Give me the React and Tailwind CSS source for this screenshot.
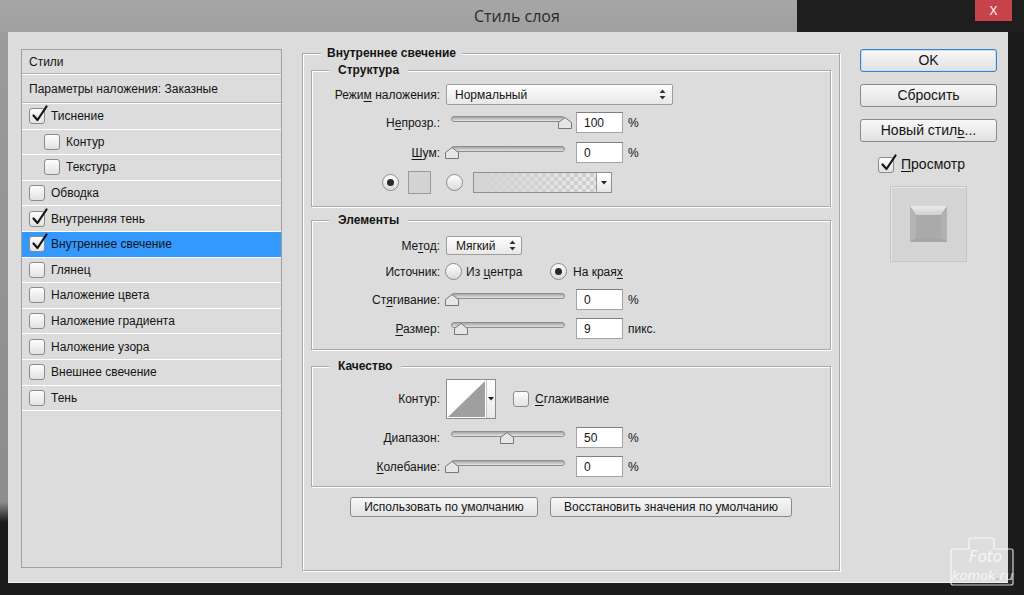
import React from 'react';

// Photoshop "Стиль слоя" dialog

const U = ({ children }) => <span className="underline underline-offset-[2px]">{children}</span>;

const Check = ({ checked }) => (
    <span className="relative block w-[16px] h-[16px] shrink-0 rounded-[3px] border border-[#8b8b8b] bg-gradient-to-b from-[#fdfdfd] to-[#e2e2e2]">
        {checked && (
            <svg className="absolute left-[1px] top-[-4px]" width="17" height="18" viewBox="0 0 17 18">
                <path d="M2.5 10.5 L6.5 15 L15.5 1.5" fill="none" stroke="#151515" strokeWidth="2.2" strokeLinecap="round" strokeLinejoin="round" />
            </svg>
        )}
    </span>
);

const Radio = ({ on }) => (
    <span className="flex items-center justify-center w-[17px] h-[17px] shrink-0 rounded-full border border-[#8b8b8b] bg-gradient-to-b from-white to-[#dadada]">
        {on && <span className="w-[7px] h-[7px] rounded-full bg-[#2a2a2a]" />}
    </span>
);

const UpDown = () => (
    <svg width="7" height="11" viewBox="0 0 7 11">
        <path d="M3.5 0.5 L6.5 4 H0.5 Z M0.5 7 H6.5 L3.5 10.5 Z" fill="#333" />
    </svg>
);

const Down = () => (
    <svg width="6" height="4" viewBox="0 0 6 4">
        <path d="M0 0 H6 L3 3.5 Z" fill="#222" />
    </svg>
);

const Slider = ({ thumb }) => (
    <div className="relative w-[125px] h-[21px] shrink-0">
        <div className="ml-[5px] mt-[4px] w-[114px] h-[6px] rounded-full border border-[#8d8d8d] bg-gradient-to-b from-[#a6a6a6] to-[#e4e4e4]" />
        <svg className={'absolute top-[5px] ' + thumb} width="14" height="12" viewBox="0 0 14 12">
            <path d="M7 0.5 L13.5 5.5 V11.5 H0.5 V5.5 Z" fill="#e6e6e6" stroke="#767676" />
        </svg>
    </div>
);

const Num = ({ v }) => (
    <div className="ml-[5px] w-[47px] h-[21px] shrink-0 flex items-center pl-[7px] bg-white border border-[#a3a3a3] border-t-[#7f7f7f]">
        {v}
    </div>
);

const Row = ({ label, className, children }) => (
    <div className={'flex items-center ' + className}>
        <span className="w-[128px] shrink-0 text-right">{label}</span>
        <div className="ml-[6px] flex items-center">{children}</div>
    </div>
);

const Group = ({ title, className, children }) => (
    <fieldset className={'border border-[#a9a9a9] shadow-[inset_1px_1px_0_#fff,1px_1px_0_#fff] ' + className}>
        <legend className="ml-[17px] px-[9px] bg-[#dcdcdc] text-[12px] leading-[14px] font-bold">{title}</legend>
        {children}
    </fieldset>
);

const styles = [
    { t: 'Тиснение', c: true },
    { t: 'Контур', sub: true },
    { t: 'Текстура', sub: true },
    { t: 'Обводка' },
    { t: 'Внутренняя тень', c: true },
    { t: 'Внутреннее свечение', c: true, sel: true },
    { t: 'Глянец' },
    { t: 'Наложение цвета' },
    { t: 'Наложение градиента' },
    { t: 'Наложение узора' },
    { t: 'Внешнее свечение' },
    { t: 'Тень' },
];

const StylesList = () => (
    <div className="mt-[17px] ml-[13px] w-[261px] h-[519px] shrink-0 border border-[#9f9f9f] bg-[#dcdcdc]">
        <div className="h-[24px] flex items-center pl-[7px] border-b border-[#b3b3b3]">Стили</div>
        <div className="h-[29px] flex items-center pl-[7px] border-t border-white border-b border-b-[#b3b3b3]">
            Параметры наложения: Заказные
        </div>
        <div className="border-t border-white">
            {styles.map((s) => (
                <div
                    key={s.t}
                    className={
                        'flex items-center h-[25.6px] border-b border-white ' +
                        (s.sel ? 'bg-[#3399ff] ' : '') +
                        (s.sub ? 'pl-[22px]' : 'pl-[7px]')
                    }
                >
                    <Check checked={s.c} />
                    <span className="ml-[6px]">{s.t}</span>
                </div>
            ))}
        </div>
    </div>
);

const Btn = ({ children, className }) => (
    <div className={'flex items-center justify-center rounded-[3px] border bg-gradient-to-b from-[#f8f8f8] to-[#e1e1e1] ' + className}>
        {children}
    </div>
);

const InnerGlow = () => (
    <fieldset className="mt-[14px] ml-[20px] w-[538px] h-[525px] shrink-0 px-[8px] border border-[#a9a9a9] shadow-[inset_1px_1px_0_#fff,1px_1px_0_#fff]">
        <legend className="ml-[10px] px-[6px] bg-[#dcdcdc] text-[12px] leading-[14px] font-bold">Внутреннее свечение</legend>

        <Group title="Структура" className="mt-[3px] pb-[12px]">
            <Row className="mt-[7px] h-[21px]" label={<>Режи<U>м</U> наложения:</>}>
                <div className="w-[227px] h-[21px] flex items-center justify-between pl-[8px] pr-[6px] rounded-[2px] border border-[#9d9d9d] bg-gradient-to-b from-[#fdfdfd] to-[#e8e8e8]">
                    <span>Нормальный</span>
                    <UpDown />
                </div>
            </Row>
            <Row className="mt-[7px] h-[21px]" label={<>Н<U>е</U>прозр.:</>}>
                <Slider thumb="left-[112px]" />
                <Num v="100" />
                <span className="ml-[5px]">%</span>
            </Row>
            <Row className="mt-[9px] h-[21px]" label={<><U>Ш</U>ум:</>}>
                <Slider thumb="left-[-1px]" />
                <Num v="0" />
                <span className="ml-[5px]">%</span>
            </Row>
            <div className="mt-[8px] h-[23px] flex items-center pl-[70px]">
                <Radio on />
                <div className="ml-[9px] w-[23px] h-[23px] border border-[#9a9a9a] bg-[#d3d3d3]" />
                <div className="ml-[15px]"><Radio /></div>
                <div className="ml-[10px] w-[139px] h-[21px] flex border border-[#8f8f8f]">
                    <div className="flex-1 bg-[linear-gradient(to_right,#d4d4d4,rgba(212,212,212,0.1)),repeating-conic-gradient(#cdcdcd_0_25%,#ececec_0_50%)] [background-size:100%_100%,8px_8px]" />
                    <div className="w-[15px] flex items-center justify-center border-l border-[#9a9a9a] bg-gradient-to-b from-white to-[#e6e6e6]">
                        <Down />
                    </div>
                </div>
            </div>
        </Group>

        <Group title="Элементы" className="mt-[6px] pb-[10px]">
            <Row className="mt-[9px] h-[19px]" label={<>Ме<U>т</U>од:</>}>
                <div className="w-[76px] h-[19px] flex items-center justify-between pl-[9px] pr-[5px] rounded-[2px] border border-[#9d9d9d] bg-gradient-to-b from-[#fdfdfd] to-[#e8e8e8]">
                    <span>Мягкий</span>
                    <UpDown />
                </div>
            </Row>
            <Row className="mt-[8px] h-[17px]" label="Источник:">
                <div className="w-[105px] ml-[-1px] flex items-center">
                    <Radio />
                    <span className="ml-[4px]">Из <U>ц</U>ентра</span>
                </div>
                <Radio on />
                <span className="ml-[6px]">На края<U>х</U></span>
            </Row>
            <Row className="mt-[9px] h-[21px]" label={<>Ст<U>я</U>гивание:</>}>
                <Slider thumb="left-[-1px]" />
                <Num v="0" />
                <span className="ml-[5px]">%</span>
            </Row>
            <Row className="mt-[8px] h-[21px]" label={<><U>Р</U>азмер:</>}>
                <Slider thumb="left-[8px]" />
                <Num v="9" />
                <span className="ml-[5px]">пикс.</span>
            </Row>
        </Group>

        <Group title="Качество" className="mt-[9px] pb-[9px]">
            <Row className="mt-[6px] h-[40px]" label="Контур:">
                <div className="flex w-[50px] h-[40px] border border-[#8b8b8b] bg-white">
                    <svg width="39" height="38" viewBox="0 0 39 38">
                        <path d="M1 37 L38 1 V37 Z" fill="#9f9f9f" />
                    </svg>
                    <div className="w-[9px] flex items-center justify-center border-l border-[#c4c4c4] bg-gradient-to-b from-white to-[#e8e8e8]">
                        <Down />
                    </div>
                </div>
                <div className="ml-[17px]"><Check /></div>
                <span className="ml-[6px]"><U>С</U>глаживание</span>
            </Row>
            <Row className="mt-[8px] h-[21px]" label={<><U>Д</U>иапазон:</>}>
                <Slider thumb="left-[54px]" />
                <Num v="50" />
                <span className="ml-[5px]">%</span>
            </Row>
            <Row className="mt-[8px] h-[21px]" label={<><U>К</U>олебание:</>}>
                <Slider thumb="left-[-1px]" />
                <Num v="0" />
                <span className="ml-[5px]">%</span>
            </Row>
        </Group>

        <div className="mt-[10px] flex justify-center gap-[12px]">
            <Btn className="w-[188px] h-[20px] border-[#8a8a8a]">Использовать по умолчанию</Btn>
            <Btn className="w-[242px] h-[20px] border-[#8a8a8a]">Восстановить значения по умолчанию</Btn>
        </div>
    </fieldset>
);

const RightColumn = () => (
    <div className="mt-[17px] ml-[20px] w-[137px] shrink-0 flex flex-col text-[14px]">
        <Btn className="h-[23px] border-[#3d80c2] shadow-[inset_0_0_0_1px_#c3e0f7]">OK</Btn>
        <Btn className="mt-[12px] h-[23px] border-[#8a8a8a]">Сбросить</Btn>
        <Btn className="mt-[12px] h-[23px] border-[#8a8a8a]">Новый стил<U>ь</U>...</Btn>
        <div className="mt-[12px] ml-[18px] flex items-center">
            <Check checked />
            <span className="ml-[7px]"><U>П</U>росмотр</span>
        </div>
        <div className="mt-[11px] ml-[30px] w-[77px] h-[76px] flex items-center justify-center border border-[#c6c6c6] bg-[#d4d4d4] shadow-[inset_1px_1px_0_#e6e6e6]">
            <svg width="37" height="36" viewBox="0 0 37 36">
                <defs>
                    <linearGradient id="pvTop" x1="0" y1="0" x2="0" y2="1">
                        <stop offset="0" stopColor="#ececec" />
                        <stop offset="1" stopColor="#cfcfcf" />
                    </linearGradient>
                </defs>
                <rect width="37" height="36" fill="#a9a9a9" />
                <path d="M0 0 H37 L31 9 H6 Z" fill="url(#pvTop)" />
                <path d="M0 0 L6 9 V32 L0 36 Z" fill="#b3b3b3" />
                <path d="M37 0 L31 9 V32 L37 36 Z" fill="#b1b1b1" />
                <path d="M0 36 L6 32 H31 L37 36 Z" fill="#a6a6a6" />
                <rect x="6" y="9" width="25" height="23" fill="#aaaaaa" />
            </svg>
        </div>
    </div>
);

const Watermark = () => (
    <div className="absolute left-[949px] top-[535px] w-[66px] h-[52px] text-white/75 italic">
        <svg className="absolute inset-0" width="66" height="52" viewBox="0 0 66 52">
            <path
                d="M2 16 Q2 14 4 14 H20 V5 Q20 3 22 3 H43 Q45 3 45 5 V14 H62 Q64 14 64 16 V48 Q64 50 62 50 H4 Q2 50 2 48 Z"
                fill="rgba(255,255,255,0.06)"
                stroke="rgba(255,255,255,0.8)"
                strokeWidth="1.2"
            />
        </svg>
        <span className="absolute left-[20px] top-[14px] text-[15px] leading-[16px] [font-family:'DejaVu_Sans',sans-serif] font-light">Foto</span>
        <span className="absolute left-[3px] top-[33px] text-[13px] leading-[16px] [font-family:'DejaVu_Sans',sans-serif]">
            komok<span className="text-[#e8863a]">.</span>ru
        </span>
    </div>
);

export default function App() {
    return (
        <div className="relative w-[1024px] h-[595px] overflow-hidden bg-[#1c1c1c] text-[12px] text-[#141414] [font-family:'Liberation_Sans',Arial,sans-serif]">
            <div className="h-[32px] flex">
                <div className="w-[797px] h-full bg-gradient-to-b from-[#a7a7a7] to-[#9f9f9f] pl-[474px] flex items-center">
                    <span className="text-[16px] text-[#2b2b2b] [font-family:'Open_Sans',sans-serif]">Стиль слоя</span>
                </div>
                <div className="flex-1 flex justify-end pr-[12px] bg-[#1e1e1e]">
                    <div className="w-[37px] h-[21px] flex items-center justify-center bg-[#c7434a] text-white text-[13px] [font-family:'Open_Sans',sans-serif]">
                        X
                    </div>
                </div>
            </div>
            <div className="h-[551px] flex">
                <div className="w-[8px] bg-[linear-gradient(to_bottom,#9b9b9b_0px,#8c8c8c_470px,#1c1c1c_490px)]" />
                <div className="w-[1000px] h-full flex items-start bg-[#dcdcdc] border-b border-[#f2f2f2]">
                    <StylesList />
                    <InnerGlow />
                    <RightColumn />
                </div>
            </div>
            <Watermark />
        </div>
    );
}
